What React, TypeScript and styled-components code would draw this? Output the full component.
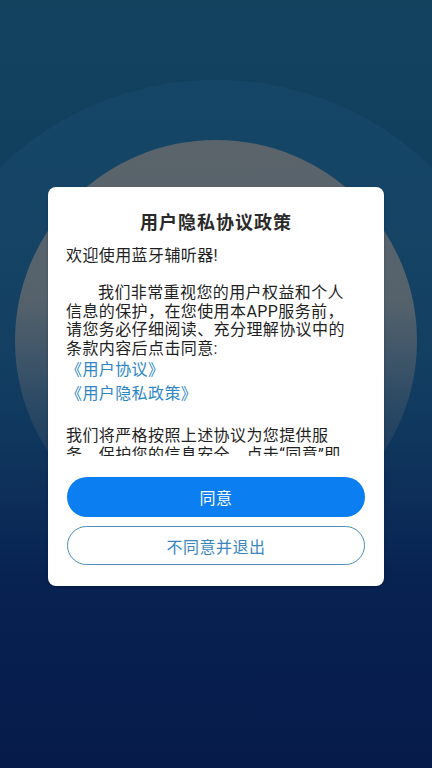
import React from 'react';
import styled, { createGlobalStyle } from 'styled-components';

const GlobalStyle = createGlobalStyle`
	html, body {
		margin: 0;
		padding: 0;
		background: #071d4c;
	}
	body {
		font-family: Roboto, 'Noto Sans CJK SC', sans-serif;
		-webkit-font-smoothing: antialiased;
	}
`;

const Screen = styled.div`
	position: relative;
	width: 432px;
	height: 768px;
	overflow: hidden;
	display: flex;
	align-items: center;
	justify-content: center;
	padding-top: 5px;
	box-sizing: border-box;
	background: linear-gradient(180deg, #13425f 0%, #11405f 20%, #0d3459 45%, #0a2855 62%, #072050 80%, #061b4a 100%);

	&::before {
		content: '';
		position: absolute;
		left: -94px;
		top: 80px;
		width: 620px;
		height: 620px;
		border-radius: 50%;
		background: linear-gradient(180deg, #164667 0%, rgba(21, 68, 102, 0.7) 45%, rgba(15, 50, 92, 0) 80%);
	}

	&::after {
		content: '';
		position: absolute;
		left: 15px;
		top: 140px;
		width: 402px;
		height: 402px;
		border-radius: 50%;
		background: linear-gradient(180deg, #5b646b 0%, #55626c 40%, rgba(62, 84, 104, 0.6) 65%, rgba(20, 55, 95, 0) 90%);
	}
`;

const Dialog = styled.div`
	position: relative;
	z-index: 1;
	width: 336px;
	box-sizing: border-box;
	padding: 24px 0 21px;
	background: #ffffff;
	border-radius: 8px;
	box-shadow: 0 1px 3px rgba(0, 0, 0, 0.25);
	display: flex;
	flex-direction: column;
`;

const Title = styled.h2`
	margin: 0;
	text-align: center;
	font-size: 18px;
	line-height: 24px;
	font-weight: 700;
	letter-spacing: 1px;
	color: #2a2a2a;
`;

const Scroll = styled.div`
	margin-top: 12px;
	height: 209px;
	padding: 0 30px 0 18px;
	overflow: hidden;
	color: #1f1f1f;
	font-size: 16px;
	letter-spacing: 0.4px;
	line-height: 18.5px;
`;

const Para = styled.p<{ $indent?: boolean; $gap?: number }>`
	margin: ${(p) => p.$gap ?? 0}px 0 0;
	text-indent: ${(p) => (p.$indent ? '2em' : '0')};
`;

const Link = styled.a`
	display: block;
	line-height: 24px;
	color: #2e86c6;
	text-decoration: none;
`;

const Actions = styled.div`
	margin-top: 21px;
	padding: 0 19px;
	display: flex;
	flex-direction: column;
	gap: 9px;
`;

const Button = styled.button<{ $primary?: boolean }>`
	height: ${(p) => (p.$primary ? 40 : 39)}px;
	border-radius: 20px;
	font-family: inherit;
	font-size: 16px;
	letter-spacing: 0.5px;
	cursor: pointer;
	border: ${(p) => (p.$primary ? 'none' : '1.5px solid #4b8cb9')};
	background: ${(p) => (p.$primary ? '#0b7ef1' : '#ffffff')};
	color: ${(p) => (p.$primary ? '#ffffff' : '#3b86c0')};
`;

export default function App() {
	return (
		<>
			<GlobalStyle />
			<Screen>
				<Dialog>
					<Title>用户隐私协议政策</Title>
					<Scroll>
						<Para>欢迎使用蓝牙辅听器!</Para>
						<Para $indent $gap={18.5}>
							我们非常重视您的用户权益和个人信息的保护，在您使用本APP服务前，请您务必仔细阅读、充分理解协议中的条款内容后点击同意:
						</Para>
						<Link href="#">《用户协议》</Link>
						<Link href="#">《用户隐私政策》</Link>
						<Para $gap={21}>
							我们将严格按照上述协议为您提供服务，保护您的信息安全，点击“同意”即表示您已阅读并同意全部条款，可以继续使用我们的产品和服务。
						</Para>
					</Scroll>
					<Actions>
						<Button $primary>同意</Button>
						<Button>不同意并退出</Button>
					</Actions>
				</Dialog>
			</Screen>
		</>
	);
}
